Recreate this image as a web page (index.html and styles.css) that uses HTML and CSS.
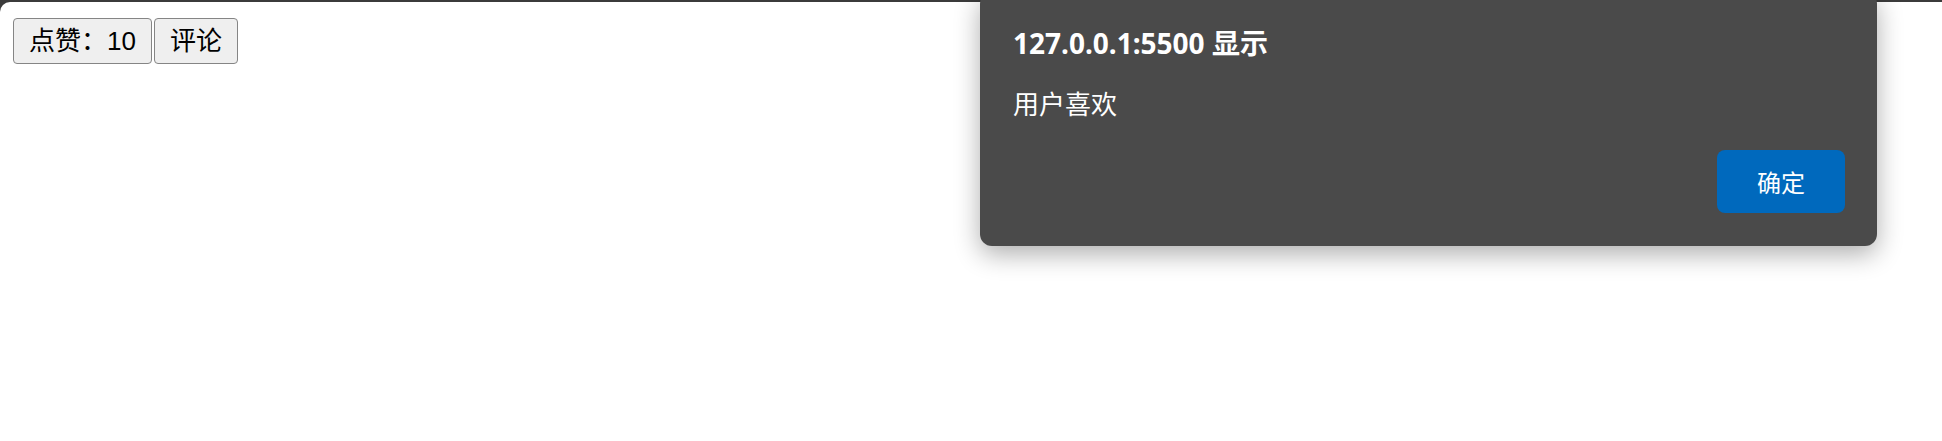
FILE: index.html
```html
<!DOCTYPE html>
<html lang="zh">
<head>
<meta charset="utf-8">
<title>点赞</title>
<link rel="stylesheet" href="styles.css">
</head>
<body>
<div class="page">
  <div class="actions">
    <button class="btn">点赞：10</button><button class="btn">评论</button>
  </div>
</div>
<div class="dialog" role="alertdialog">
  <div class="dialog-title">127.0.0.1:5500 显示</div>
  <div class="dialog-message">用户喜欢</div>
  <div class="dialog-footer">
    <button class="dialog-ok">确定</button>
  </div>
</div>
</body>
</html>
```

FILE: styles.css
```css
html {
  background: #3b3b3b;
}
body {
  margin: 0;
  height: 441px;
  overflow: hidden;
  position: relative;
  font-family: "Noto Sans", "Noto Sans CJK SC", sans-serif;
}
.page {
  margin-top: 2px;
  height: 439px;
  background: #ffffff;
  border-top-left-radius: 10px;
  padding: 16px 13px 0;
  box-sizing: border-box;
}
.actions {
  display: flex;
  gap: 2px;
}
.btn {
  height: 46px;
  padding: 0 15px;
  font-family: "Liberation Sans", "Noto Sans CJK SC", sans-serif;
  font-size: 26px;
  color: #000;
  background: #efefef;
  border: 1px solid #858585;
  border-radius: 4px;
  line-height: 1;
}
.dialog {
  position: absolute;
  left: 980px;
  top: -8px;
  width: 897px;
  height: 254px;
  box-sizing: border-box;
  background: #4a4a4a;
  border-radius: 12px;
  box-shadow: 0 8px 26px rgba(0, 0, 0, 0.32);
  padding: 32px 32px 33px 33px;
  display: flex;
  flex-direction: column;
  color: #ffffff;
}
.dialog-title {
  font-size: 28px;
  font-weight: 700;
  line-height: 38px;
}
.dialog-message {
  margin-top: 25px;
  font-size: 26px;
  line-height: 34px;
}
.dialog-footer {
  margin-top: auto;
  display: flex;
  justify-content: flex-end;
}
.dialog-ok {
  width: 128px;
  height: 63px;
  background: #0069bd;
  color: #ffffff;
  border: none;
  border-radius: 8px;
  font-family: "Noto Sans", "Noto Sans CJK SC", sans-serif;
  font-size: 24px;
}
```
